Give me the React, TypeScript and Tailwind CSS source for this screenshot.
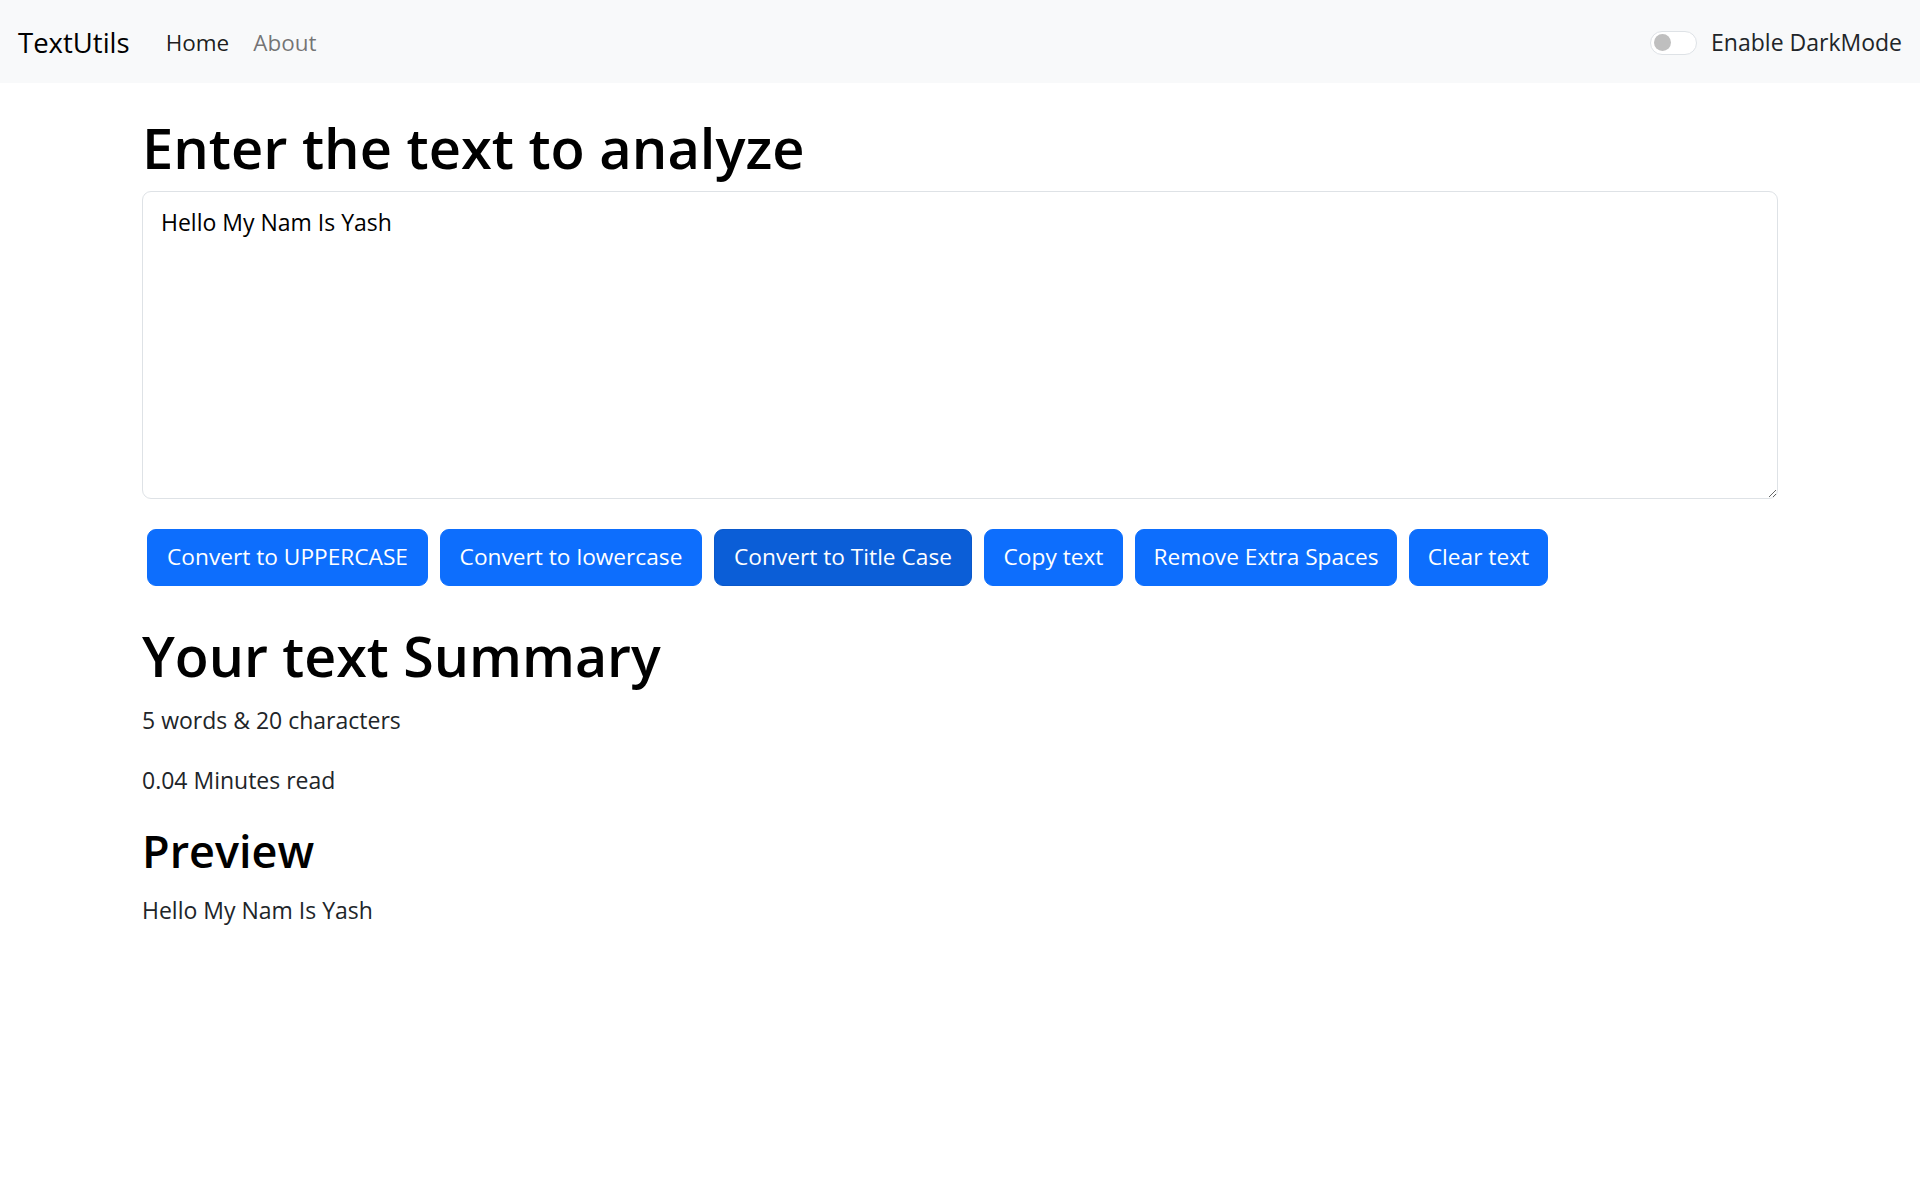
import React from "react";

const buttons = [
  { label: "Convert to UPPERCASE", active: false, w: "w-[281px]" },
  { label: "Convert to lowercase", active: false, w: "w-[262px]" },
  { label: "Convert to Title Case", active: true, w: "w-[258px]" },
  { label: "Copy text", active: false, w: "w-[139px]" },
  { label: "Remove Extra Spaces", active: false, w: "w-[262px]" },
  { label: "Clear text", active: false, w: "w-[139px]" },
];

export default function App() {
  return (
    <div className="min-h-screen bg-white text-[#212529] font-['Open_Sans',sans-serif]">
      <nav className="h-[83px] bg-[#f8f9fa] flex items-center justify-between px-[18px] pt-[2px]">
        <div className="flex items-center">
          <a className="text-[27.5px] text-black leading-none mr-[24px]">TextUtils</a>
          <a className="text-[22.5px] text-black/90 px-[12px]">Home</a>
          <a className="text-[22.5px] text-black/55 px-[12px]">About</a>
        </div>
        <div className="flex items-center">
          <div className="w-[47px] h-[24px] rounded-full border border-[#dee2e6] bg-white flex items-center px-[3px] mr-[14px]">
            <div className="w-[17px] h-[17px] rounded-full bg-[#bfbfbf]" />
          </div>
          <span className="text-[23px] text-[#212529]">Enable DarkMode</span>
        </div>
      </nav>

      <div className="mx-[142px] mt-[24px]">
        <h1 className="text-[56px] font-semibold leading-[72px] pt-[4px] mb-[8px] text-black">Enter the text to analyze</h1>
        <textarea
          className="block w-full h-[308px] border border-[#dee2e6] rounded-[9px] px-[18px] py-[12px] text-[23px] leading-[36px] text-black resize-y outline-none"
          defaultValue="Hello My Nam Is Yash"
        />
        <div className="flex mt-[24px] -mx-[1px]">
          {buttons.map((b) => (
            <button
              key={b.label}
              className={
                (b.active
                  ? "bg-[#0b5ed7] border-[#0a58ca] "
                  : "bg-[#0d6efd] border-[#0d6efd] ") +
                b.w +
                " h-[57px] mx-[6px] my-[6px] flex items-center justify-center whitespace-nowrap rounded-[9px] text-[22.7px] text-white border"
              }
            >
              {b.label}
            </button>
          ))}
        </div>
      </div>

      <div className="mx-[142px] mt-[24px]">
        <h1 className="text-[55.5px] font-semibold leading-[72px] pt-[4px] mb-[8px] text-black">Your text Summary</h1>
        <p className="text-[23px] leading-[36px] mb-[24px] pt-[2px]">5 words &amp; 20 characters</p>
        <p className="text-[23px] leading-[36px] mb-[24px]">0.04 Minutes read</p>
        <h2 className="text-[45px] font-semibold leading-[58px] mb-[12px] text-black">Preview</h2>
        <p className="text-[23px] leading-[36px]">Hello My Nam Is Yash</p>
      </div>
    </div>
  );
}
